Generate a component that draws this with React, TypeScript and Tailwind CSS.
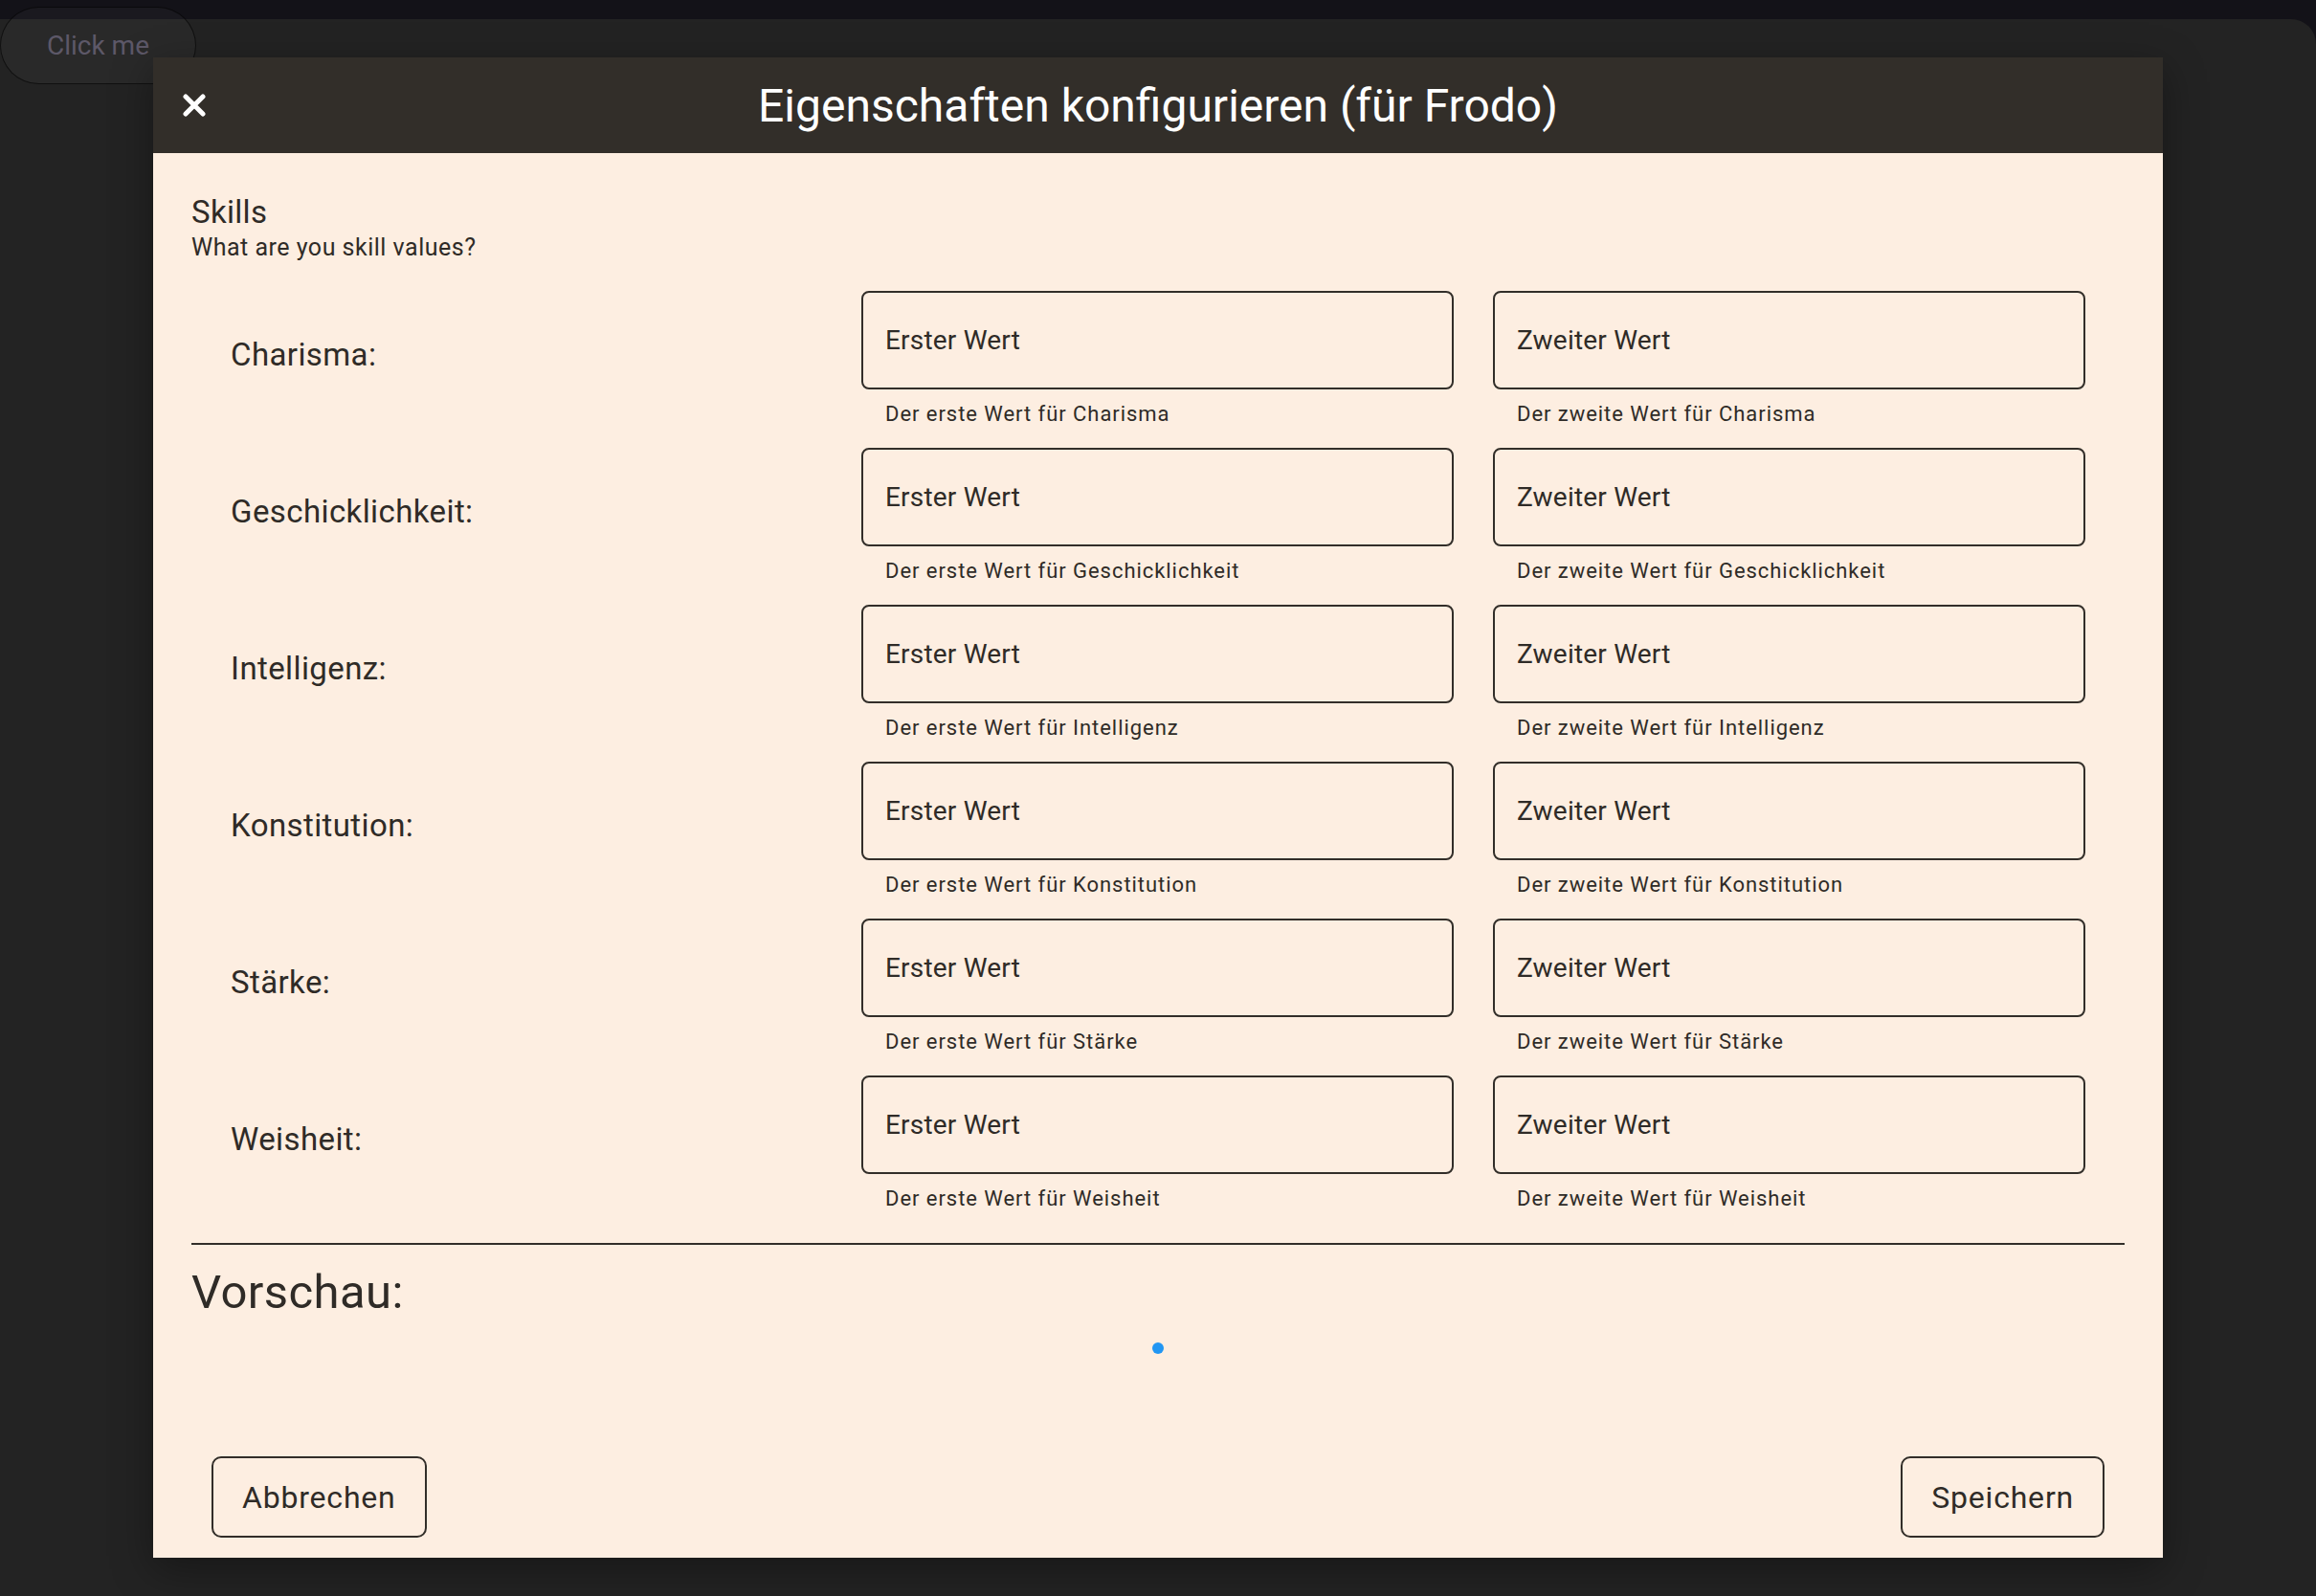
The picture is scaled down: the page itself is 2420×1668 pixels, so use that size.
import { useState } from 'react'

const SKILLS = ['Charisma', 'Geschicklichkeit', 'Intelligenz', 'Konstitution', 'Stärke', 'Weisheit']

function SkillRow({ name }: { name: string }) {
  return (
    <div className="flex h-[164px]">
      <div className="w-[700px] pl-[41px] pt-[47px] text-[33px] tracking-[0.4px]">{name}:</div>
      <div className="w-[619px]">
        <div className="h-[103px] border-2 border-[#322e29] rounded-[8px] px-[23px] flex items-center text-[28px] tracking-[0.2px]">
          Erster Wert
        </div>
        <div className="mt-[13px] pl-[25px] text-[22px] tracking-[0.95px]">Der erste Wert für {name}</div>
      </div>
      <div className="w-[619px] ml-[41px]">
        <div className="h-[103px] border-2 border-[#322e29] rounded-[8px] px-[23px] flex items-center text-[28px] tracking-[0.2px]">
          Zweiter Wert
        </div>
        <div className="mt-[13px] pl-[25px] text-[22px] tracking-[0.95px]">Der zweite Wert für {name}</div>
      </div>
    </div>
  )
}

export default function App() {
  const [open, setOpen] = useState(true)

  return (
    <div className="relative min-h-[1668px] bg-[#131218] font-['Roboto',sans-serif] leading-[normal] pt-[20px]">
      {/* button behind the dialog */}
      <button
        onClick={() => setOpen(true)}
        className="absolute left-0 top-[7px] z-10 w-[205px] h-[81px] rounded-full bg-white/[0.03] border border-black/60 text-[28px] text-[#5d5868]"
      >
        Click me
      </button>

      <div className="bg-[#232323] rounded-tr-[26px] min-h-[1648px] pt-[40px] px-[160px] pb-[40px]">
        {open && (
          <div className="relative z-20 h-[1568px] flex flex-col bg-[#fdeee1] text-[#2f2b27] shadow-[0_12px_40px_rgba(0,0,0,0.35)]">
            {/* Header */}
            <div className="h-[100px] shrink-0 bg-[#322e29] flex items-center text-white">
              <button onClick={() => setOpen(false)} className="w-[86px] h-full flex items-center justify-center">
                <svg width="24" height="24" viewBox="0 0 24 24">
                  <path d="M3 3L21 21M21 3L3 21" stroke="white" strokeWidth="5" strokeLinecap="round" />
                </svg>
              </button>
              <div className="flex-1 text-center text-[48px]">Eigenschaften konfigurieren (für Frodo)</div>
              <div className="w-[86px]" />
            </div>

            {/* Body */}
            <div className="flex-1 flex flex-col px-[40px] pt-[42px] pb-[21px]">
              <div className="text-[33px] tracking-[0.3px]">Skills</div>
              <div className="mt-[3px] text-[25px] tracking-[0.5px]">What are you skill values?</div>

              <div className="mt-[31px]">
                {SKILLS.map(s => (
                  <SkillRow key={s} name={s} />
                ))}
              </div>

              <div className="mt-[11px] h-[2px] bg-[#322e29]" />

              <div className="mt-[21px] text-[49px] tracking-[0.4px]">Vorschau:</div>
              <div className="mt-[24px] mx-auto w-[12px] h-[12px] rounded-full bg-[#2196f3]" />

              <div className="mt-auto flex justify-between px-[21px]">
                <button className="h-[85px] px-[30px] border-2 border-[#322e29] rounded-[10px] text-[32px] tracking-[0.8px]">
                  Abbrechen
                </button>
                <button className="h-[85px] px-[30px] border-2 border-[#322e29] rounded-[10px] text-[32px] tracking-[0.8px]">
                  Speichern
                </button>
              </div>
            </div>
          </div>
        )}
      </div>
    </div>
  )
}
